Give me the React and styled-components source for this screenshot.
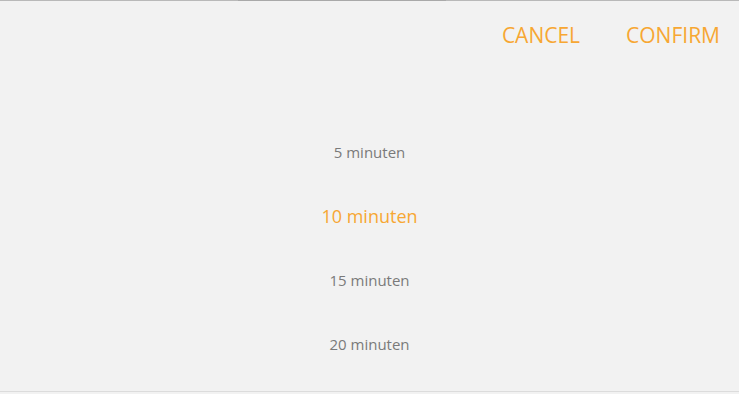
import React from "react";
import styled, { createGlobalStyle } from "styled-components";

const Global = createGlobalStyle`
  html, body { margin: 0; padding: 0; background: #f2f2f2; }
  body { font-family: "Open Sans", "Noto Sans", sans-serif; }
`;

const Sheet = styled.div`
  width: 739px;
  height: 394px;
  background: #f2f2f2;
  box-sizing: border-box;
  display: flex;
  flex-direction: column;
`;

const TopRule = styled.div`
  height: 1px;
  background: linear-gradient(to right, #b9b9b9 0, #b9b9b9 238px, #a9a9a9 238px, #a9a9a9 446px, #b9b9b9 446px);
`;

const Toolbar = styled.div`
  height: 67px;
  display: flex;
  justify-content: flex-end;
  align-items: center;
  gap: 46px;
  padding-right: 19px;
`;

const Action = styled.button`
  border: none;
  background: none;
  padding: 0;
  font-family: inherit;
  font-size: 21px;
  color: #f7a733;
  cursor: pointer;
`;

const List = styled.div`
  margin-top: 52px;
  display: flex;
  flex-direction: column;
`;

const Item = styled.div`
  height: 64px;
  display: flex;
  align-items: center;
  justify-content: center;
  font-size: ${(p) => (p.$active ? "18px" : "15px")};
  color: ${(p) => (p.$active ? "#f7a733" : "#7a7a7a")};
`;

const BottomRule = styled.div`
  margin-top: 15px;
  height: 1px;
  background: #dcdcdc;
`;

const options = ["5 minuten", "10 minuten", "15 minuten", "20 minuten"];

export default function App() {
  return (
    <>
      <Global />
      <Sheet>
        <TopRule />
        <Toolbar>
          <Action>CANCEL</Action>
          <Action>CONFIRM</Action>
        </Toolbar>
        <List>
          {options.map((o, i) => (
            <Item key={o} $active={i === 1}>
              {o}
            </Item>
          ))}
        </List>
        <BottomRule />
      </Sheet>
    </>
  );
}
